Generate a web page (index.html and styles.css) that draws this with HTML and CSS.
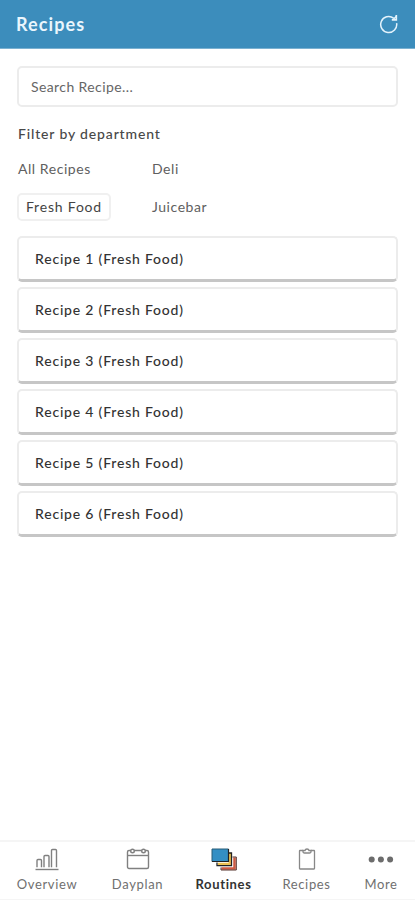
FILE: index.html
```html
<!DOCTYPE html>
<html lang="en">
<head>
    <meta charset="UTF-8">
    <meta name="viewport" content="width=device-width, initial-scale=1.0">
    <title>Recipes</title>
    <link rel="stylesheet" href="styles.css">
</head>
<body>

    <header class="header">
        <h1>Recipes</h1>
        <button class="refresh" aria-label="Refresh">
            <svg width="20" height="20" viewBox="0 0 20 20" fill="none" stroke="#e4f3fc" stroke-width="1.5">
                <path d="M14.6 4.2A8 8 0 1 0 17.6 9.2"/>
                <path d="M17.3 1V5.9H12.8" stroke-width="1.7"/>
                <path d="M17.3 2.5L14 5.5"/>
            </svg>
        </button>
    </header>

    <main class="content">
        <input class="search" type="text" placeholder="Search Recipe...">

        <h2>Filter by department</h2>
        <div class="filters">
            <button class="filter">All Recipes</button>
            <button class="filter">Deli</button>
            <button class="filter selected">Fresh Food</button>
            <button class="filter">Juicebar</button>
        </div>

        <div class="recipe-list">
            <div class="recipe">Recipe 1 (Fresh Food)</div>
            <div class="recipe">Recipe 2 (Fresh Food)</div>
            <div class="recipe">Recipe 3 (Fresh Food)</div>
            <div class="recipe">Recipe 4 (Fresh Food)</div>
            <div class="recipe">Recipe 5 (Fresh Food)</div>
            <div class="recipe">Recipe 6 (Fresh Food)</div>
        </div>
    </main>

    <nav class="tabs">
        <a class="tab overview">
            <svg width="24" height="24" viewBox="0 0 24 24" fill="none" stroke="#808080" stroke-width="1.4">
                <path d="M.5 22.5H23.5"/>
                <path d="M2 20.2V13.5Q2 12.5 3 12.5H5.5Q6.5 12.5 6.5 13.5V20.2M9 20.2V9.5Q9 8.5 10 8.5H13Q14 8.5 14 9.5V20.2M16.5 20.2V3.5Q16.5 2.5 17.5 2.5H20.5Q21.5 2.5 21.5 3.5V20.2"/>
            </svg>
            <span>Overview</span>
        </a>
        <a class="tab dayplan">
            <svg width="24" height="24" viewBox="0 0 24 24" fill="none" stroke="#808080" stroke-width="1.4">
                <rect x="1.5" y="3.5" width="21" height="18" rx="1.5"/>
                <path d="M1.5 8.5H22.5"/>
                <circle cx="6.5" cy="4" r="1.8" fill="#fff"/>
                <circle cx="17.5" cy="4" r="1.8" fill="#fff"/>
            </svg>
            <span>Dayplan</span>
        </a>
        <a class="tab routines active">
            <svg width="26" height="24" viewBox="0 0 26 24" fill="none">
                <path d="M23.5 10.5V21.5H10.5" stroke="#cf5a42" stroke-width="2.5"/>
                <path d="M21.5 10H25.3V23H10V20.5" stroke="#55332d" stroke-width="1"/>
                <path d="M18.8 6V17H7" stroke="#edc253" stroke-width="2.5"/>
                <path d="M17.5 6H20.5V18.7H6V15.5" stroke="#222" stroke-width="1.3"/>
                <path d="M1 2H17.5V14.5H1Z" fill="#338fc4" stroke="#285c77" stroke-width="1"/>
                <path d="M17.5 2V14.5H1" stroke="#222" stroke-width="1.2"/>
            </svg>
            <span>Routines</span>
        </a>
        <a class="tab recipes">
            <svg width="24" height="24" viewBox="0 0 24 24" fill="none" stroke="#888" stroke-width="1.3">
                <path d="M8 3.5H5Q4.5 3.5 4.5 4V21.5Q4.5 22 5 22H19Q19.5 22 19.5 21.5V4Q19.5 3.5 19 3.5H16"/>
                <path d="M8 3.5H10Q10.3 2 12 2T14 3.5H16V4.5Q16 6 14.5 6H9.5Q8 6 8 4.5Z"/>
            </svg>
            <span>Recipes</span>
        </a>
        <a class="tab more">
            <svg width="26" height="24" viewBox="0 0 26 24" fill="#6c6c6c">
                <circle cx="3.7" cy="12.5" r="3"/>
                <circle cx="12.9" cy="12.5" r="3"/>
                <circle cx="22.1" cy="12.5" r="3"/>
            </svg>
            <span>More</span>
        </a>
    </nav>

</body>
</html>
```
FILE: styles.css
```css
* {
    box-sizing: border-box;
}

body {
    margin: 0;
    height: 900px;
    display: flex;
    flex-direction: column;
    font-family: Lato, sans-serif;
    color: #444;
    background: #fff;
}

h1, h2 {
    margin: 0;
}

button {
    font-family: inherit;
    background: none;
    border: 1px solid transparent;
    padding: 0;
}

.header {
    height: 49px;
    padding: 0 16px;
    display: flex;
    align-items: center;
    justify-content: space-between;
    background: #3c8dbc;
    border-bottom: 1px solid #7bb1d1;
}

.header h1 {
    color: #eaf6fd;
    font-size: 18px;
    line-height: 24px;
    font-weight: bold;
    letter-spacing: 1.1px;
}

.refresh {
    width: 20px;
    height: 20px;
    border: none;
}

.refresh svg {
    display: block;
}

.content {
    flex: 1;
    padding: 17px 17px 0 17px;
}

.search {
    display: block;
    width: 381px;
    height: 41px;
    padding: 0 12px;
    border: 2px solid #ececec;
    border-radius: 5px;
    font-family: inherit;
    font-size: 14px;
    letter-spacing: 0.4px;
}

.search::placeholder {
    color: #666;
}

.content h2 {
    margin: 17px 0 0 1px;
    font-size: 14px;
    line-height: 20px;
    font-weight: 500;
    letter-spacing: 0.85px;
    color: #484848;
}

.filters {
    display: grid;
    grid-template-columns: 134px 1fr;
    row-gap: 11px;
    margin-top: 11px;
    justify-items: start;
}

.filter {
    height: 27px;
    font-size: 14px;
    line-height: 24px;
    letter-spacing: 0.55px;
    color: #606060;
}

.filter.selected {
    width: 94px;
    height: 28px;
    border: 2px solid #f0f0f0;
    border-radius: 5px;
    letter-spacing: 0.8px;
    color: #444;
}

.recipe-list {
    display: flex;
    flex-direction: column;
    gap: 5px;
    margin-top: 15px;
}

.recipe {
    width: 381px;
    height: 46px;
    padding-left: 16px;
    border: 2px solid #ececec;
    border-bottom: 3px solid #c6c6c6;
    border-radius: 5px;
    font-size: 14px;
    font-weight: 500;
    line-height: 41px;
    letter-spacing: 0.8px;
    color: #333;
}

.tabs {
    height: 60px;
    display: flex;
    border-top: 2px solid #f5f5f5;
    border-bottom: 1px solid #f5f5f5;
}

.tab {
    display: flex;
    flex-direction: column;
    align-items: center;
    padding-top: 5px;
    font-size: 13px;
    line-height: 18px;
    letter-spacing: 0.65px;
    color: #707070;
}

.tab span {
    margin-top: 4px;
}

.overview {
    width: 94px;
}

.dayplan {
    width: 87px;
}

.routines {
    width: 85px;
}

.recipes {
    width: 81px;
}

.more {
    width: 68px;
}

.tab.active {
    font-weight: bold;
    color: #333;
}
```
